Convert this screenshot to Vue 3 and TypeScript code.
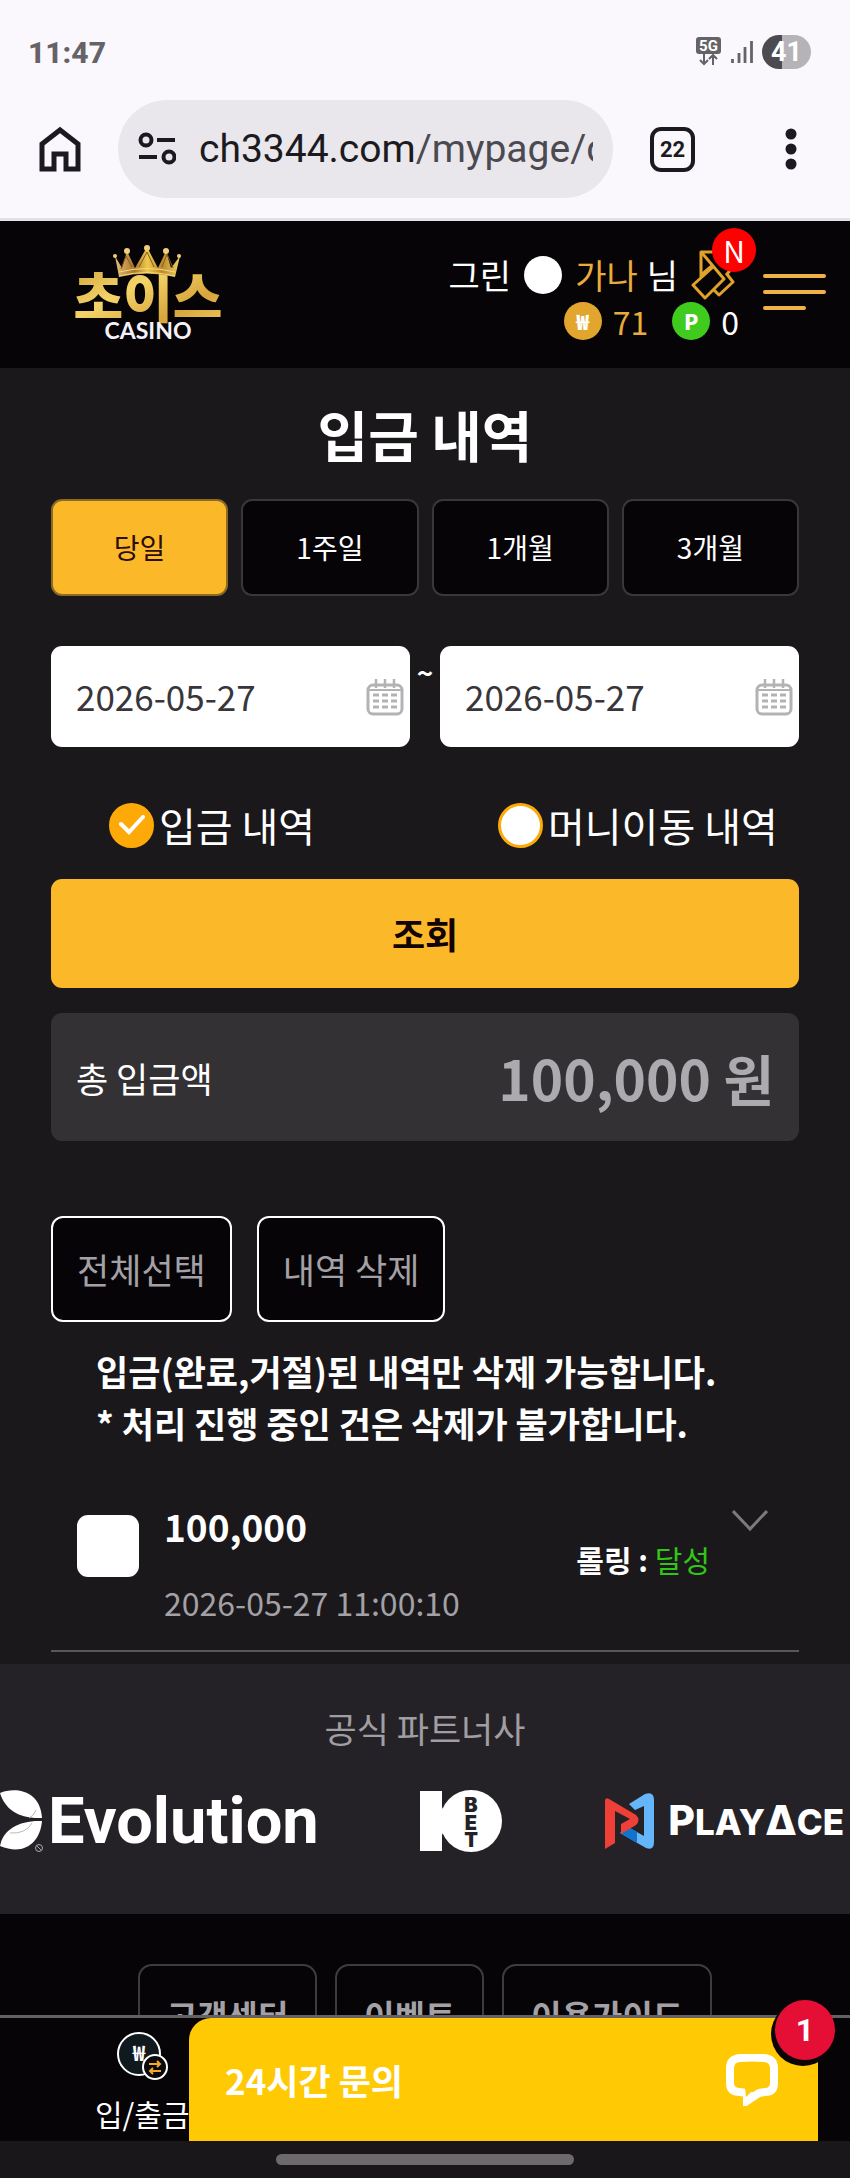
<script setup lang="ts">
import { ref } from 'vue'

const periods: string[] = ['당일', '1주일', '1개월', '3개월']
const activePeriod = ref<string>('당일')
const startDate = ref<string>('2026-05-27')
const endDate = ref<string>('2026-05-27')
const historyType = ref<string>('deposit')
const selected = ref<boolean>(false)
const types = [
  { value: 'deposit', label: '입금 내역' },
  { value: 'transfer', label: '머니이동 내역' },
]
const footerLinks: string[] = ['고객센터', '이벤트', '이용가이드']
</script>

<template>
  <div class="screen">
    <div class="chrome">
      <div class="status">
        <span class="clock">11:47</span>
        <div class="status-icons">
          <svg width="26" height="30" viewBox="0 0 26 30">
            <rect x="0" y="0" width="25" height="17" rx="3" fill="#656367" />
            <text x="12.5" y="14" text-anchor="middle" class="net">5G</text>
            <path d="M8 17v10M4 23l4 4 4-4M17 28V18M13 22l4-4 4 4" fill="none" stroke="#656367" stroke-width="2" />
          </svg>
          <svg width="22" height="24" viewBox="0 0 22 24">
            <path d="M1.500 19v4M8 13v10M14 7v16M20.500 1v22" stroke="#656367" stroke-width="2.800" />
          </svg>
          <span class="battery">41</span>
        </div>
      </div>
      <div class="toolbar">
        <button class="bare home" aria-label="홈">
          <svg width="42" height="46" viewBox="0 0 42 46">
            <path d="M3 18L21 4l18 14v25H27V28H15v15H3z" fill="none" stroke="#1b1a20" stroke-width="5" />
          </svg>
        </button>
        <div class="address">
          <svg width="38" height="34" viewBox="0 0 38 34">
            <g fill="none" stroke="#1b1a20" stroke-width="4">
              <circle cx="8" cy="8" r="5.500" />
              <circle cx="31" cy="25" r="5.500" />
              <path d="M19 8h18M1 25h18" />
            </g>
          </svg>
          <span class="url">ch3344.com<span class="path">/mypage/d</span></span>
        </div>
        <button class="tabs-count">22</button>
        <button class="bare more" aria-label="메뉴 더보기">
          <svg width="12" height="42" viewBox="0 0 12 42" fill="#1b1a20">
            <circle cx="6" cy="6" r="5.500" /><circle cx="6" cy="21" r="5.500" /><circle cx="6" cy="36" r="5.500" />
          </svg>
        </button>
      </div>
    </div>

    <header class="site-header">
      <a href="#" class="logo" aria-label="초이스 CASINO">
        <svg width="146" height="98" viewBox="0 0 146 98">
          <defs>
            <linearGradient id="gold" x1="0" y1="0" x2="1" y2="1">
              <stop offset="0" stop-color="#c99a35" />
              <stop offset="0.400" stop-color="#f4d468" />
              <stop offset="0.700" stop-color="#d7a53c" />
              <stop offset="1" stop-color="#f3cf63" />
            </linearGradient>
            <linearGradient id="crown" x1="0" y1="0" x2="1" y2="0">
              <stop offset="0" stop-color="#e3bd72" />
              <stop offset="0.300" stop-color="#a9762f" />
              <stop offset="0.500" stop-color="#f0c94c" />
              <stop offset="0.720" stop-color="#b8882c" />
              <stop offset="1" stop-color="#f0d06a" />
            </linearGradient>
          </defs>
          <text x="73" y="73" text-anchor="middle" class="brand">초이스</text>
          <path d="M40 11l7 12 5-17 8 17 12-21 11 21 8-17 5 17 9-12-5 21q-28-7-56 0z" fill="url(#crown)" />
          <path d="M44 31q28-7 56 0M44 27q28-7 56 0" fill="none" stroke="#f6d77a" stroke-width="1" />
          <path d="M46 24l5-13 6 11M64 22l8-15 7 15M87 22l5-13 6 14" fill="none" stroke="#8a5b1d" stroke-width="1" />
          <g fill="#f2d07a">
            <circle cx="40" cy="11" r="2" /><circle cx="52" cy="6" r="3" /><circle cx="72" cy="3" r="3" />
            <circle cx="91" cy="6" r="3" /><circle cx="104" cy="11" r="2" />
          </g>
          <text x="73" y="94" text-anchor="middle" class="casino">CASINO</text>
        </svg>
      </a>
      <div class="account">
        <div class="user-line">
          <span>그린</span><i class="dot"></i><span class="gold">가나</span><span>님</span>
          <a href="#" class="coupon" aria-label="쿠폰">
            <svg width="44" height="50" viewBox="0 0 44 50">
              <g fill="none" stroke="#e0a228" stroke-width="3" stroke-linejoin="round">
                <path d="M10 27V2h17L42 19" />
                <path d="M11 3l22 26L14 48 2 35l20-18" />
                <path d="M10 25l12-10M35 23l7 9-14 13-6-6M36 24l6-7" />
              </g>
            </svg>
            <span class="new">N</span>
          </a>
        </div>
        <div class="money-line">
          <i class="coin won">₩</i><span class="gold">71</span>
          <i class="coin point">P</i><span>0</span>
        </div>
      </div>
      <button class="bare burger" aria-label="메뉴"><i></i><i></i><i></i></button>
    </header>

    <main>
      <h1>입금 내역</h1>
      <div class="periods">
        <button v-for="p in periods" :key="p" :class="{ on: p === activePeriod }" @click="activePeriod = p">{{ p }}</button>
      </div>
      <div class="dates">
        <label class="date">
          <input v-model="startDate" type="text" aria-label="시작일" />
          <svg width="38" height="38" viewBox="0 0 38 38" fill="none" stroke="#b3b3b5">
            <rect x="2" y="7" width="34" height="29" rx="5" stroke-width="3" />
            <path d="M3 12h32" stroke-width="2" />
            <path d="M10 1v9M19 1v9M28 1v9" stroke-width="2.500" />
            <path d="M7 17h24M7 23h24M7 29h24" stroke-width="3" stroke-dasharray="6 3" />
          </svg>
        </label>
        <span class="tilde">~</span>
        <label class="date">
          <input v-model="endDate" type="text" aria-label="종료일" />
          <svg width="38" height="38" viewBox="0 0 38 38" fill="none" stroke="#b3b3b5">
            <rect x="2" y="7" width="34" height="29" rx="5" stroke-width="3" />
            <path d="M3 12h32" stroke-width="2" />
            <path d="M10 1v9M19 1v9M28 1v9" stroke-width="2.500" />
            <path d="M7 17h24M7 23h24M7 29h24" stroke-width="3" stroke-dasharray="6 3" />
          </svg>
        </label>
      </div>
      <div class="types">
        <label v-for="t in types" :key="t.value">
          <input v-model="historyType" type="radio" name="type" :value="t.value" />
          <span class="mark">
            <svg width="26" height="20" viewBox="0 0 26 20">
              <path d="M2 9l8 8L24 2" fill="none" stroke="#fff" stroke-width="4" stroke-linecap="round" />
            </svg>
          </span>{{ t.label }}
        </label>
      </div>
      <button class="search">조회</button>
      <div class="total">
        <span>총 입금액</span><strong>100,000 원</strong>
      </div>
      <div class="actions">
        <button>전체선택</button><button>내역 삭제</button>
      </div>
      <p class="notice">입금(완료,거절)된 내역만 삭제 가능합니다.<br />* 처리 진행 중인 건은 삭제가 불가합니다.</p>
      <div class="record">
        <input v-model="selected" type="checkbox" aria-label="100,000 선택" />
        <div class="record-main">
          <strong>100,000</strong>
          <span>2026-05-27 11:00:10</span>
        </div>
        <div class="rolling"><b>롤링 :</b> <span>달성</span></div>
        <button class="bare expand" aria-label="상세 보기">
          <svg width="36" height="22" viewBox="0 0 36 22">
            <path d="M1 1l17 18L35 1" fill="none" stroke="#7d7a7e" stroke-width="3" />
          </svg>
        </button>
      </div>
    </main>

    <section class="partners">
      <h2>공식 파트너사</h2>
      <div class="brands">
        <div class="evolution">
          <svg width="44" height="64" viewBox="0 0 44 64">
            <path d="M0 4C14-2 40 0 42 29 18 30 5 20 0 4z" fill="#fff" />
            <path d="M42 32C40 54 24 67 0 57 3 40 20 31 42 32z" fill="#fff" />
            <path d="M36 21q-2 6-7 8M32 34q-6 11-22 10" fill="none" stroke="#bbb9bd" stroke-width="1" />
            <circle cx="39" cy="59" r="3.500" fill="none" stroke="#aaa8ac" />
            <path d="M37 57l4 4" stroke="#aaa8ac" />
          </svg>
          <span>Evolution</span>
        </div>
        <div class="tenbet">
          <svg width="82" height="64" viewBox="0 0 82 64">
            <path d="M0 2h22v16l6 14-6 14v16H0z" fill="#fff" />
            <circle cx="51" cy="32" r="31" fill="#fff" />
            <g class="bet" text-anchor="middle">
              <text x="51" y="23">B</text><text x="51" y="41">E</text><text x="51" y="58">T</text>
            </g>
          </svg>
        </div>
        <div class="playace">
          <svg width="52" height="58" viewBox="0 0 52 58">
            <path d="M25 12L41 2q9-3 9 6v42q0 9-8 6L16 41l8-6 16 9V14l-9 4z" fill="#64b5fa" />
            <path d="M16 41l8-6 9 5v11z" fill="#1273ce" />
            <path d="M1 57V9q0-4 4-2l27 16q5 5 0 10L17 42V32l9-5-15-8v32z" fill="#ee4036" />
          </svg>
          <span class="pa-text"><span class="cap">P</span>LAY<span class="cap">Δ</span>CE</span>
        </div>
      </div>
    </section>

    <footer>
      <nav class="footer-links">
        <a v-for="l in footerLinks" :key="l" href="#">{{ l }}</a>
      </nav>
    </footer>

    <div class="dock">
      <a href="#" class="cash">
        <svg width="52" height="50" viewBox="0 0 52 50">
          <circle cx="22" cy="23" r="21" fill="#101a1e" stroke="#fff" stroke-width="2" />
          <text x="22" y="30" text-anchor="middle" class="won-sign">₩</text>
          <circle cx="38" cy="36" r="12" fill="#0b0b0d" stroke="#fff" stroke-width="2" />
          <path d="M32 33h11M40 30l3 3-3 3M44 40H33M36 37l-3 3 3 3" fill="none" stroke="#f3a92c" stroke-width="2" />
        </svg>
        <span>입/출금</span>
      </a>
      <button class="chat">
        <span>24시간 문의</span>
        <svg width="54" height="52" viewBox="0 0 54 52">
          <path d="M14 4q12-1 24 0 10 1 10 10v15q0 9-9 9l-6 1-12 8v-8l-7-1q-10 0-10-9V14Q4 5 14 4z" fill="none" stroke="#fff" stroke-width="8" />
          <path d="M20 38h18L20 52z" fill="#fff" />
          <path d="M19 33h16l-8 3-7 7z" fill="#ffc904" />
        </svg>
        <span class="badge">1</span>
      </button>
    </div>
    <div class="gesture"><i></i></div>
  </div>
</template>

<style>
body {
  margin: 0;
  background: #1a181b;
}
</style>

<style scoped>
* {
  box-sizing: border-box;
}
.screen {
  font-family: "Noto Sans CJK KR", sans-serif;
  color: #fff;
  background: #1a181b;
  overflow: hidden;
}
button,
input {
  font-family: inherit;
  margin: 0;
}
a {
  color: inherit;
  text-decoration: none;
}
svg {
  display: block;
  flex: none;
}
.bare {
  border: 0;
  padding: 0;
  background: none;
}
.gold {
  color: #e9ac3a;
}
.chrome {
  background: #faf8fd;
  border-bottom: 3px solid #e2e1e6;
  font-family: Roboto, sans-serif;
}
.status {
  height: 100px;
  padding: 4px 39px 0 28px;
  display: flex;
  align-items: center;
  justify-content: space-between;
}
.clock {
  font-size: 30px;
  font-weight: 800;
  color: #656367;
}
.status-icons {
  display: flex;
  align-items: center;
  gap: 9px;
}
.net {
  font: bold 15px Roboto, sans-serif;
  fill: #fff;
}
.battery {
  width: 49px;
  height: 34px;
  border-radius: 17px;
  background: linear-gradient(90deg, #4d4b50 41%, #b5b3b7 41%);
  color: #fff;
  font-size: 27px;
  font-weight: 700;
  line-height: 34px;
  text-align: center;
}
.toolbar {
  height: 118px;
  padding: 0 53px 20px 39px;
  display: flex;
  align-items: center;
}
.address {
  flex: 1;
  height: 98px;
  margin: 0 37px;
  padding: 0 20px;
  border-radius: 49px;
  background: #e9e7ec;
  display: flex;
  align-items: center;
  gap: 23px;
  min-width: 0;
}
.url {
  flex: 1;
  overflow: hidden;
  white-space: nowrap;
  font-size: 39px;
  color: #1b1a20;
}
.path {
  color: #4c4a51;
}
.tabs-count {
  width: 45px;
  height: 45px;
  padding: 0;
  border: 4px solid #1b1a20;
  border-radius: 11px;
  background: none;
  color: #1b1a20;
  font-size: 22px;
  font-weight: 700;
}
.more {
  margin-left: 90px;
}
.site-header {
  height: 147px;
  background: #060407;
  padding: 0 24px 0 75px;
  display: flex;
}
.logo {
  margin-top: 24px;
}
.brand {
  font: 900 54px "Noto Sans CJK KR", sans-serif;
  fill: url(#gold);
}
.casino {
  font: bold 23px Lato, sans-serif;
  fill: #f4f2f8;
}
.account {
  margin-left: auto;
  padding-top: 30px;
  font-size: 34px;
  line-height: 48px;
}
.user-line {
  display: flex;
  align-items: center;
  gap: 13px;
  height: 48px;
}
.dot {
  width: 38px;
  height: 38px;
  border-radius: 50%;
  background: #fff;
}
.user-line .gold {
  margin-right: -4px;
}
.coupon {
  position: relative;
  margin-right: 28px;
}
.new {
  position: absolute;
  left: 21px;
  top: -22px;
  width: 44px;
  height: 44px;
  border-radius: 50%;
  background: #fe0000;
  font-size: 30px;
  line-height: 44px;
  text-align: center;
}
.money-line {
  display: flex;
  align-items: center;
  justify-content: flex-end;
  margin-right: 24px;
  font-size: 32px;
  line-height: 44px;
}
.coin {
  width: 38px;
  height: 38px;
  margin-right: 11px;
  border-radius: 50%;
  font-style: normal;
  font-weight: 900;
  font-size: 21px;
  line-height: 38px;
  text-align: center;
}
.won {
  background: #e2a62f;
}
.point {
  margin-left: 24px;
  background: #3fcc1f;
}
.burger {
  width: 63px;
  padding-top: 53px;
  display: flex;
  flex-direction: column;
  align-items: flex-start;
  gap: 12px;
}
.burger i {
  width: 100%;
  height: 4px;
  border-radius: 2px;
  background: #eeb249;
}
.burger i:last-child {
  width: 43px;
}
main {
  padding: 0 51px 12px;
}
h1 {
  margin: 0;
  padding: 24px 0 25px;
  text-align: center;
  font-size: 55px;
  line-height: 82px;
  font-weight: 700;
}
.periods {
  display: grid;
  grid-template-columns: repeat(4, 1fr);
  gap: 13px;
}
.periods button {
  height: 97px;
  padding-bottom: 3px;
  border: 2px solid #39373a;
  border-radius: 11px;
  background: #060407;
  color: #fff;
  font-size: 28px;
}
.periods .on {
  background: #fbb829;
  border-color: #8c6a22;
  color: #2b0d09;
}
.dates {
  margin-top: 50px;
  display: flex;
}
.date {
  flex: 1;
  min-width: 0;
  height: 101px;
  padding: 0 6px 0 25px;
  border-radius: 11px;
  background: #fff;
  display: flex;
  align-items: center;
}
.date input {
  flex: 1;
  min-width: 0;
  border: 0;
  padding: 0 0 2px;
  background: none;
  color: #39363b;
  font-size: 35px;
}
.tilde {
  width: 30px;
  text-align: center;
  font-size: 28px;
  line-height: 52px;
  font-weight: 700;
}
.types {
  margin-top: 48px;
  display: grid;
  grid-template-columns: 389px 1fr;
  padding-left: 58px;
}
.types label {
  display: flex;
  align-items: center;
  gap: 5px;
  font-size: 40px;
  line-height: 60px;
  white-space: nowrap;
}
.types input {
  position: absolute;
  opacity: 0;
}
.mark {
  width: 45px;
  height: 45px;
  border: 3px solid #fda908;
  border-radius: 50%;
  background: #fff;
  display: grid;
  place-items: center;
}
input:checked + .mark {
  background: #fda908;
}
.search {
  display: block;
  width: 100%;
  height: 109px;
  margin-top: 24px;
  padding-bottom: 3px;
  border: 0;
  border-radius: 11px;
  background: #fbb829;
  color: #120406;
  font-size: 36px;
  font-weight: 700;
}
.total {
  margin-top: 25px;
  height: 128px;
  padding: 0 25px;
  border-radius: 11px;
  background: #343135;
  display: flex;
  align-items: center;
  justify-content: space-between;
  font-size: 35px;
}
.total strong {
  color: #aca9af;
  font-size: 55px;
}
.actions {
  margin-top: 75px;
  display: flex;
  gap: 25px;
}
.actions button {
  height: 106px;
  padding: 0 24px 2px;
  border: 2px solid #fff;
  border-radius: 12px;
  background: #060407;
  color: #a3a1a6;
  font-size: 35px;
}
.notice {
  margin: 23px 0 0;
  padding-left: 45px;
  font-size: 35px;
  line-height: 52px;
  font-weight: 700;
}
.record {
  margin-top: 51px;
  height: 152px;
  padding: 0 31px 0 26px;
  border-bottom: 2px solid #59575a;
  display: flex;
  align-items: flex-start;
}
.record input {
  appearance: none;
  width: 62px;
  height: 62px;
  margin: 15px 25px 0 0;
  border-radius: 11px;
  background: #fff;
}
.record-main {
  display: flex;
  flex-direction: column;
}
.record-main strong {
  font-size: 37px;
  line-height: 52px;
}
.record-main span {
  margin-top: 24px;
  color: #a3a1a6;
  font-size: 32px;
  line-height: 52px;
}
.rolling {
  margin: 39px 22px 0 auto;
  font-size: 30px;
  line-height: 40px;
}
.rolling span {
  color: #32c416;
}
.expand {
  margin-top: 10px;
}
.partners {
  height: 250px;
  background: #252227;
  text-align: center;
}
h2 {
  margin: 0;
  padding-top: 38px;
  font-size: 35px;
  line-height: 52px;
  font-weight: 400;
  color: #a09ea3;
}
.brands {
  margin-top: 35px;
  padding-right: 6px;
  height: 64px;
  display: flex;
  align-items: center;
  justify-content: space-between;
}
.evolution {
  display: flex;
  align-items: center;
  gap: 4px;
  font: bold 65px/64px Roboto, sans-serif;
}
.bet {
  font: 900 20px Inter, sans-serif;
  fill: #252227;
}
.playace {
  display: flex;
  align-items: center;
  gap: 12px;
}
.pa-text {
  font: 800 35px/44px Inter, sans-serif;
}
.cap {
  font-size: 41px;
}
footer {
  height: 101px;
  overflow: hidden;
  padding-top: 50px;
  background: #070408;
}
.footer-links {
  display: flex;
  justify-content: center;
  gap: 18px;
}
.footer-links a {
  height: 100px;
  padding: 0 27px;
  border: 2px solid #3f3c40;
  border-radius: 14px;
  color: #a3a1a6;
  font-size: 33px;
  line-height: 98px;
  font-weight: 700;
}
.dock {
  height: 126px;
  padding-right: 32px;
  border-top: 3px solid #626063;
  background: #060407;
  display: flex;
}
.cash {
  width: 189px;
  padding: 13px 0 0 95px;
  font-size: 30px;
  line-height: 44px;
  white-space: nowrap;
}
.cash svg {
  margin: 0 0 10px 22px;
}
.won-sign {
  font: bold 21px "Noto Sans CJK KR", sans-serif;
  fill: #fff;
}
.chat {
  position: relative;
  flex: 1;
  border: 0;
  padding: 0 38px 0 36px;
  border-radius: 22px 0 0 0;
  background: #ffc904;
  color: #fff;
  font-size: 35px;
  font-weight: 700;
  display: flex;
  align-items: center;
  justify-content: space-between;
}
.badge {
  position: absolute;
  right: -17px;
  top: -18px;
  width: 60px;
  height: 60px;
  border-radius: 50%;
  background: #e50f35;
  box-shadow: -2px 4px 0 2px #0b0507;
  font: bold 32px/60px Roboto, sans-serif;
  text-align: center;
}
.gesture {
  height: 37px;
  padding-top: 13px;
  background: #1a171a;
}
.gesture i {
  display: block;
  width: 35%;
  height: 11px;
  margin: 0 auto;
  border-radius: 6px;
  background: #6d696c;
}
</style>
